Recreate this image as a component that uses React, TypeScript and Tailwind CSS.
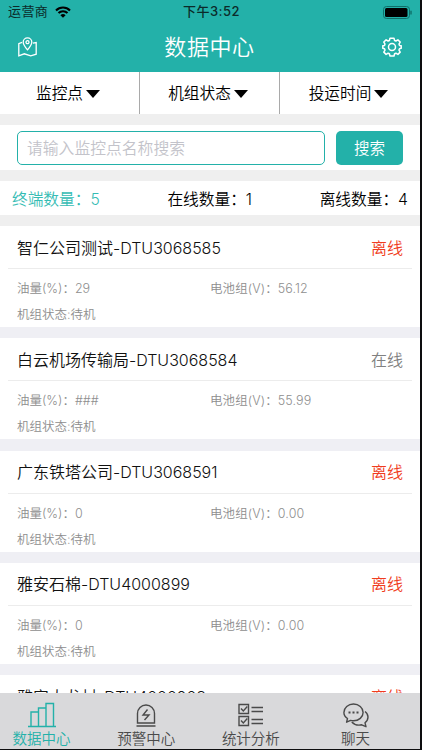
import React, { useState } from 'react';

interface Device {
    name: string;
    online: boolean;
    oil: string;
    voltage: string;
    state: string;
}

const devices: Device[] = [
    { name: '智仁公司测试-DTU3068585', online: false, oil: '29', voltage: '56.12', state: '待机' },
    { name: '白云机场传输局-DTU3068584', online: true, oil: '###', voltage: '55.99', state: '待机' },
    { name: '广东铁塔公司-DTU3068591', online: false, oil: '0', voltage: '0.00', state: '待机' },
    { name: '雅安石棉-DTU4000899', online: false, oil: '0', voltage: '0.00', state: '待机' },
    { name: '雅安大龙村-DTU4000908', online: false, oil: '0', voltage: '0.00', state: '待机' },
];

const filters = ['监控点', '机组状态', '投运时间'];

function StatusBar() {
    return (
        <div className="grid h-6 grid-cols-3 items-center px-2 text-[13px] font-normal text-[#0b2b2a]">
            <div className="flex items-center gap-[7px]">
                <span className="tracking-[0.4px]">运营商</span>
                <svg width="16" height="12" viewBox="0 0 16 12" fill="none" stroke="#000" strokeWidth="2.1">
                    <path d="M1 4.4a10 10 0 0 1 14 0" />
                    <path d="M3.5 7.1a6.4 6.4 0 0 1 9 0" />
                    <path d="M8 11.8 5.4 9.2a3.7 3.7 0 0 1 5.2 0z" fill="#000" stroke="none" />
                </svg>
            </div>
            <span className="pl-[3px] text-center font-medium tracking-[0.5px]">下午3:52</span>
            <svg className="justify-self-end" width="29" height="13" viewBox="0 0 29 13" fill="none">
                <rect x="0.5" y="0.5" width="26" height="12" rx="3" stroke="#0f6f69" />
                <rect x="2" y="2" width="22.5" height="9" rx="1.5" fill="#000" />
                <path d="M28 4.8v3.6" stroke="#0f6f69" strokeWidth="1.4" />
            </svg>
        </div>
    );
}

function Header() {
    return (
        <header className="h-[72px] shrink-0 bg-[#23b1a9]">
            <StatusBar />
            <div className="flex h-[46px] items-center justify-between px-[18px] text-white">
                <svg width="19" height="20" viewBox="0 0 19 20" fill="none" stroke="currentColor" strokeWidth="1.3">
                    <path d="M4 5.4.8 6.6v12.2l5.5-2 6.4 2 5.5-1.6V5.6L15 6.2" />
                    <path d="M9.5 12.8C6.8 9.6 5.2 7.7 5.2 5.2a4.3 4.3 0 0 1 8.6 0c0 2.5-1.6 4.4-4.3 7.6z" />
                    <circle cx="9.5" cy="5.2" r="1.5" />
                </svg>
                <h1 className="text-[22px] leading-none font-[350] tracking-[0.6px]">数据中心</h1>
                <svg width="20" height="20" viewBox="0 0 20 20" fill="none" stroke="currentColor" strokeWidth="1.5" strokeLinejoin="round">
                    <path d="M8 1.2h4l.6 2.3 1.3.5 2-1.2 2.3 2.3-1.2 2 .5 1.3 1.7.4v2.5l-1.7.5-.5 1.3 1.2 2-2.3 2.3-2-1.2-1.3.5-.6 2.3H8l-.6-2.3-1.3-.5-2 1.2-2.3-2.3 1.2-2-.5-1.3-1.7-.5V8.8l1.7-.4.5-1.3-1.2-2 2.3-2.3 2 1.2 1.3-.5z" />
                    <circle cx="10" cy="10" r="3.5" />
                </svg>
            </div>
        </header>
    );
}

function FilterBar() {
    return (
        <div className="grid h-[42px] shrink-0 grid-cols-3 divide-x divide-[#a9a9a9] bg-white">
            {filters.map((label) => (
                <button key={label} className="flex items-center justify-center gap-[3px] pt-[2px] pr-[3px] text-[15.7px] text-black">
                    {label}
                    <svg width="14" height="8" viewBox="0 0 14 8">
                        <path d="M0 0h14L7 8z" />
                    </svg>
                </button>
            ))}
        </div>
    );
}

function SearchBar() {
    const [query, setQuery] = useState('');

    return (
        <div className="mt-[11px] flex h-[45px] shrink-0 items-center gap-[11px] bg-white px-[17px]">
            <input
                type="text"
                placeholder="请输入监控点名称搜索"
                value={query}
                onChange={(event) => setQuery(event.target.value)}
                className="h-[34px] min-w-0 flex-1 rounded-[5px] border border-[#23b1a9] px-[9px] pt-px text-[15.8px] placeholder:text-[#c3c3ca] focus:outline-none"
            />
            <button className="h-[34px] w-[67px] rounded-[5px] bg-[#23b1a9] pt-[2px] text-[15.5px] text-white">搜索</button>
        </div>
    );
}

function Summary() {
    return (
        <div className="mt-[11px] flex h-[34px] shrink-0 items-center justify-between bg-white px-3 pt-[3px] text-[15.7px] text-black">
            <span className="text-[#35bcb4]">终端数量：5</span>
            <span>在线数量：1</span>
            <span>离线数量：4</span>
        </div>
    );
}

function DeviceCard({ device }: { device: Device }) {
    return (
        <div className="h-[101px] shrink-0 bg-white">
            <div className="mx-2 flex h-[43px] items-center justify-between border-b border-[#ececec] px-[9px] pt-px text-[16px]">
                <span className="text-[#111]">{device.name}</span>
                <span className={device.online ? 'text-[#808080]' : 'text-[#f03c20]'}>{device.online ? '在线' : '离线'}</span>
            </div>
            <div className="grid grid-cols-2 px-[17px] pt-[7px] text-[12.5px] leading-[26px] text-[#8e8e8e]">
                <span>油量(%)：{device.oil}</span>
                <span className="tracking-[0.1px]">电池组(V)：{device.voltage}</span>
                <span>机组状态:{device.state}</span>
            </div>
        </div>
    );
}

function ChartIcon() {
    return (
        <svg width="28" height="26" viewBox="0 0 28 26" fill="none" stroke="currentColor" strokeWidth="1.4">
            <path d="M0 24.5h28M3 24V10h7.5M10.5 24V6H18M18 24V1.5h7.5V24" />
        </svg>
    );
}

function AlarmIcon() {
    return (
        <svg width="20" height="23" viewBox="0 0 20 23" fill="none" stroke="currentColor" strokeWidth="1.4">
            <path d="M1.5 19V9.5a8.5 8.5 0 0 1 17 0V19zM.5 22h19M11.5 5.5 7 11h6l-4.5 5" />
        </svg>
    );
}

function ListIcon() {
    return (
        <svg width="25" height="24" viewBox="0 0 25 24" fill="none" stroke="currentColor" strokeWidth="1.4">
            <path d="M1 1.5h9.5v9H1zM1 13.5h9.5v9H1z" />
            <path d="m3 5.5 2.3 2.5 4-4.5M3 17.5l2.3 2.5 4-4.5M13.5 4.5H25M13.5 8.5H25M13.5 16.5H25M13.5 20.5H25" />
        </svg>
    );
}

function ChatIcon() {
    return (
        <svg width="26" height="25" viewBox="0 0 26 25" fill="none" stroke="currentColor" strokeWidth="1.4" strokeLinejoin="round">
            <path d="M4.5 15.5C2.2 14 .9 11.8.9 9.4.9 4.7 5.2 1 10.5 1s9.6 3.7 9.6 8.4-4.3 8.4-9.6 8.4c-1 0-2-.1-2.9-.4l-4 1.8z" />
            <path d="M22 8.5c1.9 1.4 3 3.4 3 5.6 0 2.3-1.2 4.3-3 5.7l1 3.9-4.3-1.9c-4 .8-7.7-.3-9.9-2.8" />
            <path d="M5.5 9.5h2M9.5 9.5h2M13.5 9.5h2" strokeWidth="1.8" />
        </svg>
    );
}

const tabs = [
    { label: '数据中心', icon: <ChartIcon /> },
    { label: '预警中心', icon: <AlarmIcon /> },
    { label: '统计分析', icon: <ListIcon /> },
    { label: '聊天', icon: <ChatIcon /> },
];

export default function App() {
    const [activeTab, setActiveTab] = useState('数据中心');

    return (
        <div className="h-[750px] w-[422px] bg-[#0d0d0f] pb-px font-['Inter','Noto_Sans_CJK_SC',sans-serif] font-[350]">
            <div className="flex h-full w-[420px] flex-col overflow-hidden bg-[#efefef]">
                <Header />
                <FilterBar />
                <SearchBar />
                <Summary />
                <div className="mt-[11px] flex min-h-0 flex-1 flex-col gap-[11.3px] overflow-hidden bg-[#efeff4]">
                    {devices.map((device) => (
                        <DeviceCard key={device.name} device={device} />
                    ))}
                </div>
                <nav className="flex h-14 shrink-0 gap-[21.7px] bg-[#d9d9db]">
                    {tabs.map((tab) => (
                        <button
                            key={tab.label}
                            onClick={() => setActiveTab(tab.label)}
                            className={`flex w-[83px] flex-col items-center pt-2 text-[14.5px] leading-[20px] ${activeTab === tab.label ? 'text-[#23b1a9]' : 'text-[#4a4a4a]'}`}
                        >
                            <span className="flex h-7 items-center">{tab.icon}</span>
                            <span>{tab.label}</span>
                        </button>
                    ))}
                </nav>
            </div>
        </div>
    );
}
